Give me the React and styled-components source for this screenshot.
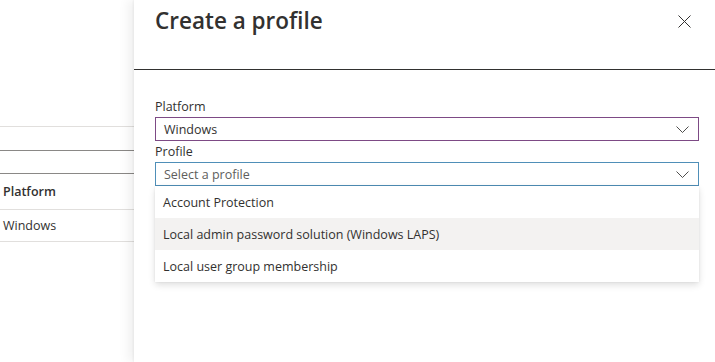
import styled, { createGlobalStyle } from "styled-components";

const Global = createGlobalStyle`
  html, body {
    margin: 0;
    padding: 0;
    background: #ffffff;
    font-family: "Open Sans", "Noto Sans", "Liberation Sans", sans-serif;
    color: #323130;
  }
`;

function Chevron() {
  return (
    <svg width="13" height="7" viewBox="0 0 13 7" fill="none">
      <path d="M0.5 0.5 L6.5 6.5 L12.5 0.5" stroke="#3b3a39" strokeWidth="0.9" />
    </svg>
  );
}

function CloseIcon() {
  return (
    <svg width="13" height="13" viewBox="0 0 13 13" fill="none">
      <path d="M0.5 0.5 L12.5 12.5 M12.5 0.5 L0.5 12.5" stroke="#323130" strokeWidth="1" />
    </svg>
  );
}

function App() {
  const options = [
    "Account Protection",
    "Local admin password solution (Windows LAPS)",
    "Local user group membership",
  ];

  return (
    <>
      <Global />
      <Page>
        <Behind>
          <BlankRow h={126} />
          <Rule tone="#e1dfdd" />
          <BlankRow h={23} />
          <Rule tone="#8a8886" />
          <BlankRow h={22} />
          <Rule tone="#8a8886" />
          <Cell bold h={35}>Platform</Cell>
          <Rule tone="#e1dfdd" />
          <Cell h={31}>Windows</Cell>
          <Rule tone="#e1dfdd" />
        </Behind>

        <Panel>
          <Header>
            <Title>Create a profile</Title>
            <CloseButton>
              <CloseIcon />
            </CloseButton>
          </Header>

          <Body>
            <Label>Platform</Label>
            <Select border="#7d4a85">
              <span>Windows</span>
              <Chevron />
            </Select>

            <Label>Profile</Label>
            <Select border="#4f8fb8">
              <Placeholder>Select a profile</Placeholder>
              <Chevron />
            </Select>

            <Menu>
              {options.map((o, i) => (
                <Option key={o} active={i === 1}>
                  {o}
                </Option>
              ))}
            </Menu>
          </Body>
        </Panel>
      </Page>
    </>
  );
}

export default App;

const Page = styled.div`
  display: flex;
  width: 715px;
  height: 362px;
  overflow: hidden;
`;

const Behind = styled.div`
  width: 134px;
  flex-shrink: 0;
  display: flex;
  flex-direction: column;
`;

const BlankRow = styled.div`
  height: ${(p) => p.h}px;
`;

const Rule = styled.div`
  height: 1px;
  background: ${(p) => p.tone};
`;

const Cell = styled.div`
  height: ${(p) => p.h}px;
  display: flex;
  align-items: center;
  padding-left: 3px;
  font-size: 12.5px;
  font-weight: ${(p) => (p.bold ? 600 : 400)};
  color: #323130;
`;

const Panel = styled.div`
  flex: 1;
  background: #ffffff;
  box-shadow: -6px 0 10px rgba(0, 0, 0, 0.06), -1px 0 2px rgba(0, 0, 0, 0.05);
  display: flex;
  flex-direction: column;
  position: relative;
`;

const Header = styled.div`
  height: 70px;
  box-sizing: border-box;
  border-bottom: 1px solid #323130;
  display: flex;
  justify-content: space-between;
  align-items: flex-start;
  padding: 3px 24px 0 21px;
`;

const Title = styled.h1`
  margin: 0;
  font-size: 22.5px;
  font-weight: 600;
  line-height: 36px;
  color: #323130;
`;

const CloseButton = styled.div`
  padding-top: 12px;
  display: flex;
`;

const Body = styled.div`
  padding: 26px 16px 0 21px;
  display: flex;
  flex-direction: column;
`;

const Label = styled.div`
  font-size: 12.5px;
  line-height: 21px;
  color: #323130;
`;

const Select = styled.div`
  height: 24px;
  box-sizing: border-box;
  border: 1px solid ${(p) => p.border};
  display: flex;
  align-items: center;
  justify-content: space-between;
  padding: 0 9px 0 8px;
  font-size: 12.5px;
  color: #323130;
`;

const Placeholder = styled.span`
  color: #605e5c;
`;

const Menu = styled.div`
  background: #ffffff;
  border-radius: 2px;
  box-shadow: 0 3px 7px rgba(0, 0, 0, 0.13), 0 0 2px rgba(0, 0, 0, 0.1);
  display: flex;
  flex-direction: column;
`;

const Option = styled.div`
  height: 32px;
  display: flex;
  align-items: center;
  padding-left: 8px;
  font-size: 12.5px;
  color: #323130;
  background: ${(p) => (p.active ? "#f3f2f1" : "#ffffff")};
`;
